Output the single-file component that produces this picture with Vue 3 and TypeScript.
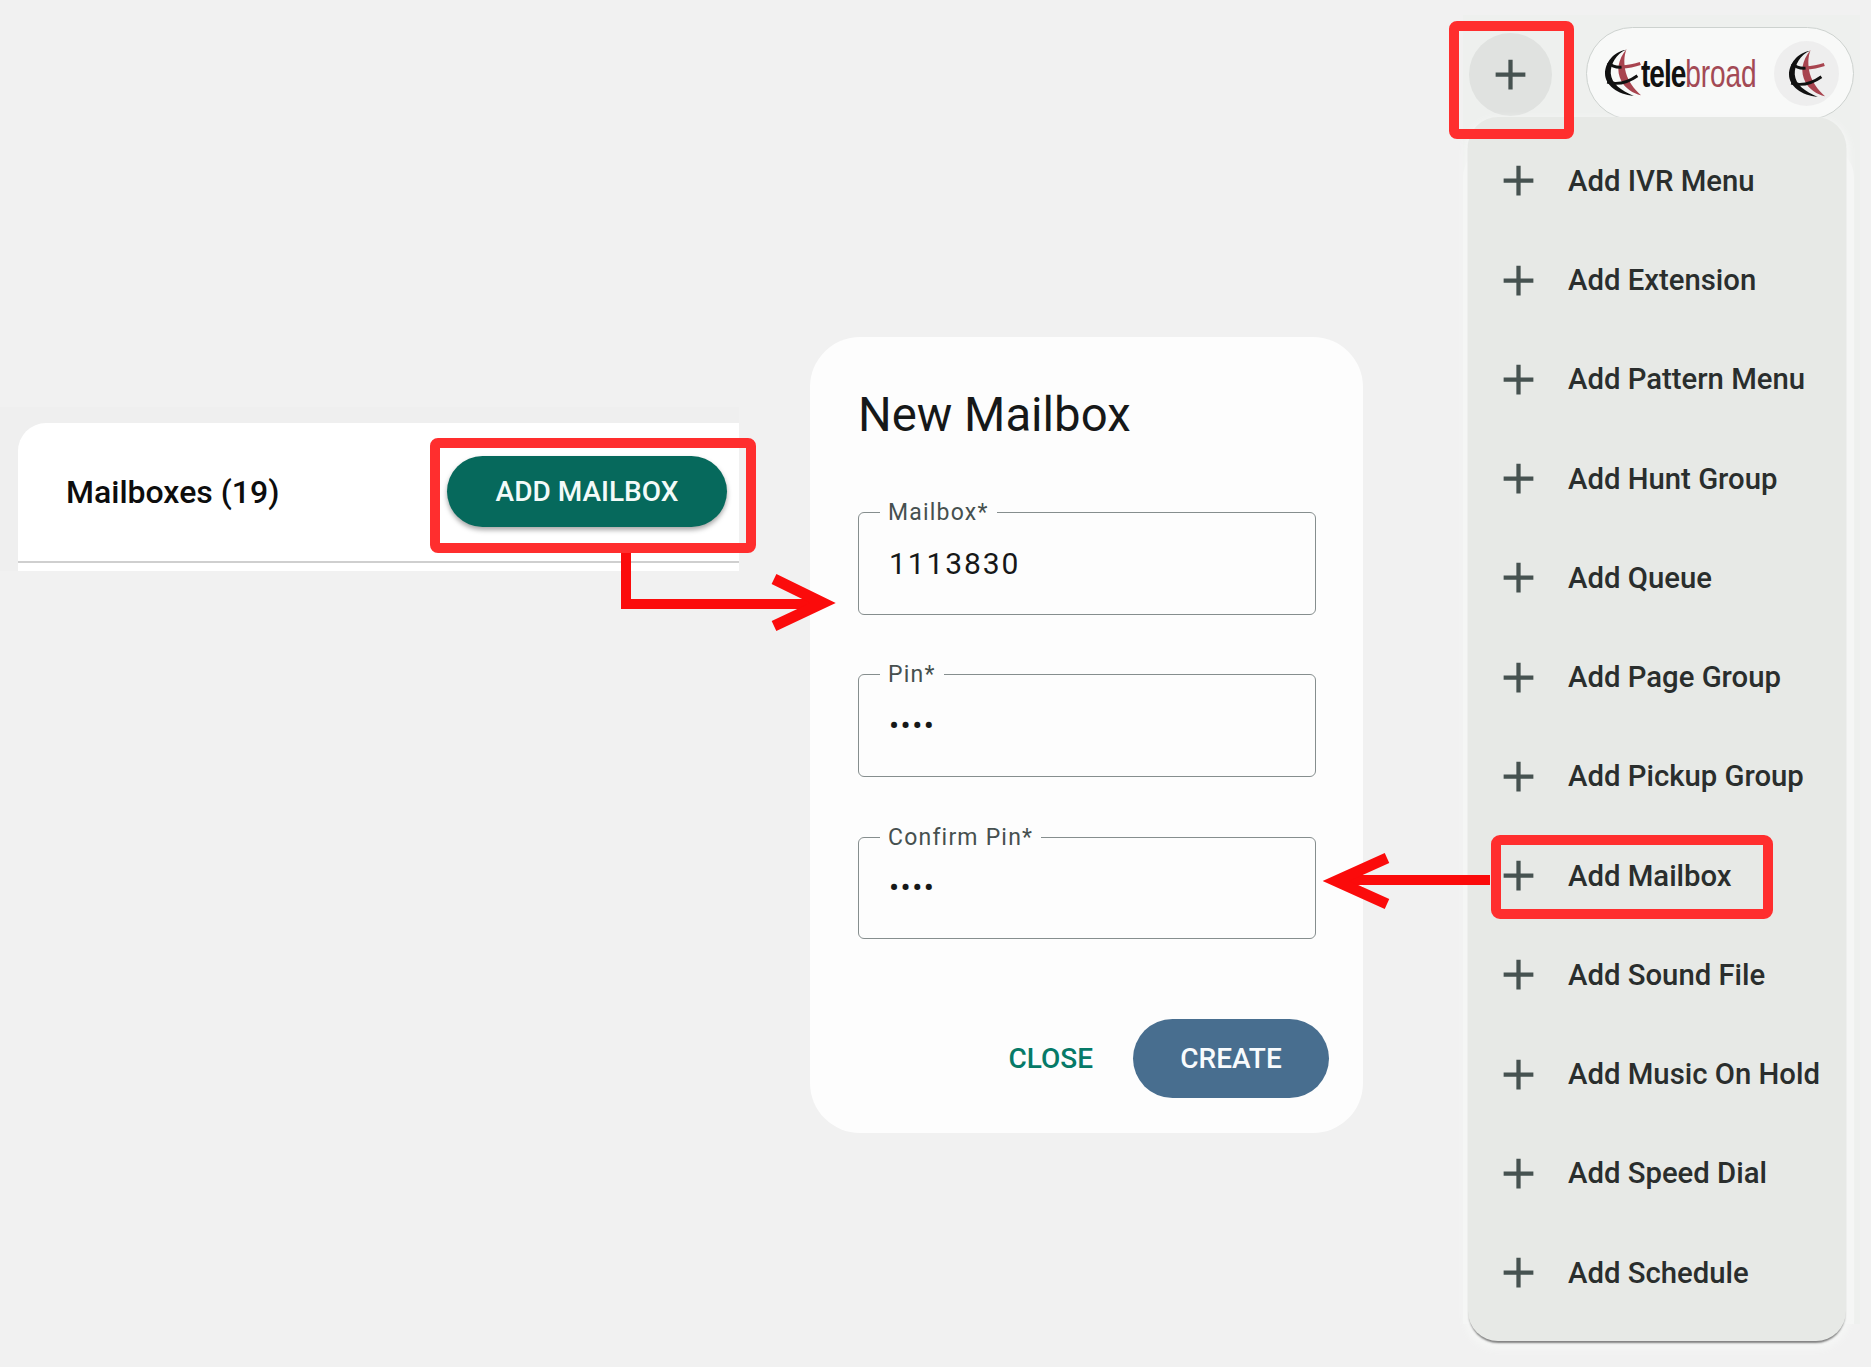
<script setup lang="ts">
const menuItems: string[] = [
  'Add IVR Menu', 'Add Extension', 'Add Pattern Menu', 'Add Hunt Group',
  'Add Queue', 'Add Page Group', 'Add Pickup Group', 'Add Mailbox',
  'Add Sound File', 'Add Music On Hold', 'Add Speed Dial', 'Add Schedule',
]
const fields: { label: string; value: string; secret: boolean }[] = [
  { label: 'Mailbox*', value: '1113830', secret: false },
  { label: 'Pin*', value: '••••', secret: true },
  { label: 'Confirm Pin*', value: '••••', secret: true },
]
</script>

<template>
  <div class="canvas">
    <svg class="defs" width="0" height="0" aria-hidden="true">
      <symbol id="globe" viewBox="0 0 100 130">
        <path fill="#a8444f" d="M60 0C36 30 30 60 46 90c10 18 32 34 54 38C80 110 66 92 58 66 52 42 52 20 60 0Z" />
        <path fill="none" stroke="#a8444f" stroke-width="9" d="M44 50c16-1 34-3 54-10" />
        <path fill="#111" d="M58 2C22 8 0 40 0 68c0 32 35 59 80 62C44 116 18 95 16 68 15 40 32 14 58 2Z" />
        <path fill="none" stroke="#111" stroke-width="8" d="M8 38c12 10 27 13 38 12" />
        <path fill="none" stroke="#111" stroke-width="8" d="M6 92c29 8 59 0 84-18" />
      </symbol>
    </svg>

    <section class="strip">
      <div class="card">
        <div class="card-head">
          <span class="card-title">Mailboxes (19)</span>
          <button class="btn-add">ADD MAILBOX</button>
        </div>
        <div class="card-foot"></div>
      </div>
    </section>

    <section class="modal">
      <h2 class="modal-title">New Mailbox</h2>
      <div class="fields">
        <div v-for="f in fields" :key="f.label" class="field">
          <span class="field-label">{{ f.label }}</span>
          <span class="field-value" :class="{ secret: f.secret }">{{ f.value }}</span>
        </div>
      </div>
      <div class="actions">
        <button class="btn-close">CLOSE</button>
        <button class="btn-create">CREATE</button>
      </div>
    </section>

    <section class="topbar">
      <div class="topbar-row">
        <button class="btn-plus" aria-label="Add">
          <svg class="plus" viewBox="0 0 24 24"><path d="M19 13h-6v6h-2v-6H5v-2h6V5h2v6h6v2z" /></svg>
        </button>
        <div class="pill">
          <svg class="globe-big"><use href="#globe" /></svg>
          <span class="wordmark"><span class="wm-a">tele</span><span class="wm-b">broad</span></span>
          <span class="avatar"><svg class="globe-small"><use href="#globe" /></svg></span>
        </div>
      </div>
      <div class="backing"></div>
      <ul class="menu">
        <li v-for="m in menuItems" :key="m" class="menu-item">
          <svg class="plus" viewBox="0 0 24 24"><path d="M19 13h-6v6h-2v-6H5v-2h6V5h2v6h6v2z" /></svg>
          <span>{{ m }}</span>
        </li>
      </ul>
    </section>

    <svg class="notes" width="1871" height="1367" viewBox="0 0 1871 1367" aria-hidden="true">
      <g fill="none" stroke="#ff2e2e" stroke-width="10">
        <rect x="1454" y="26" width="115" height="108" rx="3" />
        <rect x="435" y="443" width="316" height="105" rx="3" />
        <rect x="1496" y="840" width="272" height="74" rx="4" />
      </g>
      <g fill="none" stroke="#fb0b0b" stroke-width="10">
        <path d="M626 553V604H823" />
        <path d="M1490 880H1338" />
      </g>
      <g fill="none" stroke="#fb0b0b" stroke-width="11" stroke-linejoin="miter">
        <path d="M774 579 823 603 774 626" />
        <path d="M1387 858 1336 881 1387 904" />
      </g>
    </svg>
  </div>
</template>

<style>
html, body { margin: 0; background: #f1f1f1; }
</style>

<style scoped>
.canvas {
  position: relative;
  width: 1871px;
  height: 1367px;
  overflow: hidden;
  background: #f1f1f1;
  font-family: Roboto, "Liberation Sans", sans-serif;
}
.defs { position: absolute; }
button {
  border: 0;
  padding: 0;
  font: inherit;
  background: none;
}

/* clipped list header */
.strip {
  position: absolute;
  left: 0;
  top: 407px;
  width: 739px;
  height: 164px;
  box-sizing: border-box;
  padding: 16px 0 0 18px;
  background: #efefef;
}
.card {
  height: 148px;
  display: flex;
  flex-direction: column;
  background: #fff;
  border-top-left-radius: 28px;
}
.card-head {
  height: 140px;
  box-sizing: border-box;
  display: flex;
  align-items: center;
  justify-content: space-between;
  padding: 0 12px 0 49px;
  border-bottom: 2px solid #cfcfcf;
}
.card-title {
  margin-left: -1px;
  font-size: 32px;
  font-weight: 500;
  color: #0d0d0d;
}
.btn-add {
  width: 280px;
  height: 71px;
  margin-top: -1px;
  border-radius: 36px;
  background: #06695c;
  color: #f3fbf9;
  font-size: 28px;
  font-weight: 500;
  box-shadow: 0 3px 5px rgba(0, 0, 0, .35);
}

/* dialog */
.modal {
  position: absolute;
  left: 810px;
  top: 337px;
  width: 553px;
  height: 796px;
  box-sizing: border-box;
  padding: 48px 34px 35px 48px;
  display: flex;
  flex-direction: column;
  background: #fdfdfd;
  border-radius: 50px;
}
.modal-title {
  margin: 0 0 67px;
  font-size: 47.3px;
  line-height: 60px;
  font-weight: 400;
  color: #161818;
}
.fields {
  width: 458px;
  display: flex;
  flex-direction: column;
  gap: 59.75px;
}
.field {
  position: relative;
  height: 102.5px;
  box-sizing: border-box;
  display: flex;
  align-items: center;
  padding-left: 30px;
  border: 1px solid #868e8e;
  border-radius: 6px;
}
.field-label {
  position: absolute;
  left: 21px;
  top: -15px;
  padding: 0 8px;
  background: #fdfdfd;
  font-size: 23px;
  line-height: 30px;
  letter-spacing: 1.2px;
  color: #46504f;
  white-space: nowrap;
}
.field-value {
  font-size: 30px;
  letter-spacing: 1.9px;
  color: #161818;
}
.field-value.secret {
  font-size: 30px;
  letter-spacing: 1.5px;
}
.actions {
  margin-top: 80px;
  display: flex;
  align-items: center;
  justify-content: flex-end;
  gap: 40px;
}
.btn-close {
  color: #067a68;
  font-size: 28px;
  font-weight: 500;
}
.btn-create {
  width: 196px;
  height: 79px;
  border-radius: 40px;
  background: #486e8f;
  color: #f8fbfd;
  font-size: 28px;
  font-weight: 500;
}

/* top bar and dropdown */
.topbar {
  position: absolute;
  left: 1463px;
  top: 15px;
  width: 397px;
  height: 1309px;
  background: #eef0ee;
}
.topbar-row {
  display: flex;
  align-items: flex-start;
  gap: 34px;
  padding: 12px 0 0 6px;
}
.btn-plus {
  width: 83px;
  height: 83px;
  margin-top: 6px;
  display: flex;
  align-items: center;
  justify-content: center;
  border-radius: 50%;
  background: #e0e2e0;
}
.plus {
  width: 51px;
  height: 51px;
  flex: none;
  fill: #465250;
}
.pill {
  width: 268px;
  height: 93px;
  box-sizing: border-box;
  display: flex;
  align-items: center;
  padding: 0 14px 0 18px;
  background: #f8f9f8;
  border: 1px solid #cdd2cf;
  border-radius: 47px;
}
.globe-big {
  width: 36px;
  height: 47px;
  flex: none;
  margin-top: -2px;
}
.wordmark {
  flex: none;
  width: 156px;
  margin: 0 -43px 0 0;
  font-family: "Liberation Sans", sans-serif;
  font-size: 39px;
  line-height: 44px;
  letter-spacing: -.2px;
  white-space: nowrap;
  transform: scaleX(.72);
  transform-origin: 0 50%;
}
.wm-a { color: #111; font-weight: 700; letter-spacing: -1.4px; }
.wm-b { color: #a34a55; }
.avatar {
  width: 65px;
  height: 65px;
  margin-left: auto;
  display: flex;
  align-items: center;
  justify-content: center;
  border-radius: 50%;
  background: #eeeeee;
}
.globe-small {
  width: 36px;
  height: 47px;
}
.backing {
  position: absolute;
  left: 0;
  top: 132px;
  width: 391px;
  height: 1177px;
  background: #f5f6f5;
  border-radius: 30px 30px 0 0;
}
.menu {
  position: absolute;
  left: 5px;
  top: 102px;
  width: 378px;
  height: 1224px;
  box-sizing: border-box;
  margin: 0;
  padding: 14.2px 0 0 25px;
  list-style: none;
  background: #e7e9e6;
  border-radius: 30px;
  box-shadow: 0 3px 2px -1px rgba(50, 50, 50, .6), 0 5px 6px 4px #f5f6f5;
}
.menu-item {
  height: 99.27px;
  display: flex;
  align-items: center;
  gap: 24px;
  font-size: 29.3px;
  font-weight: 500;
  color: #2a2e2d;
  white-space: nowrap;
}

.notes {
  position: absolute;
  left: 0;
  top: 0;
  pointer-events: none;
}
</style>
